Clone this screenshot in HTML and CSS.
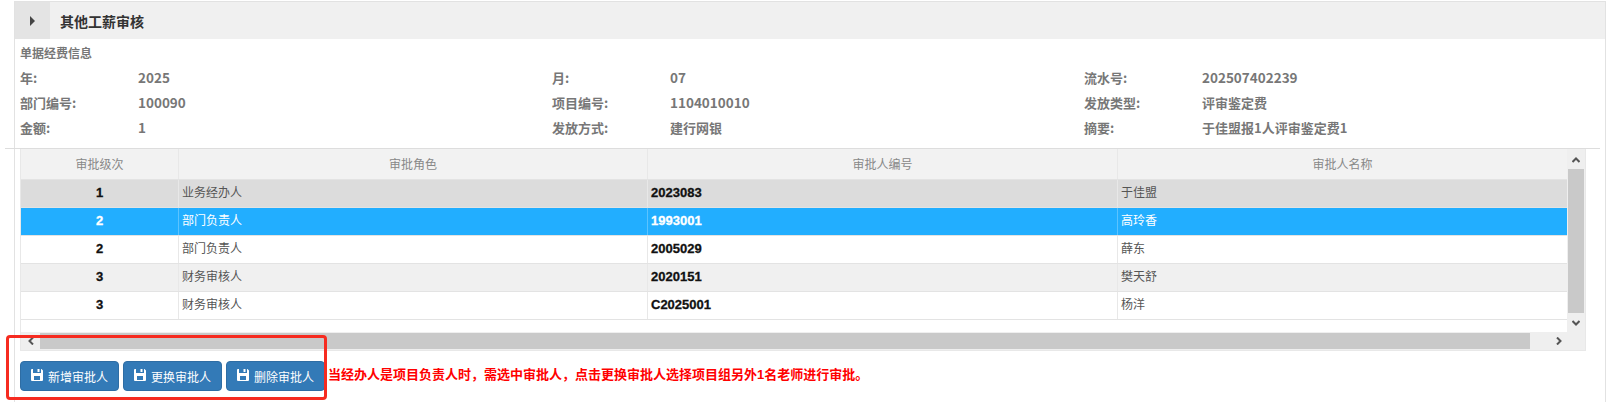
FILE: index.html
```html
<!DOCTYPE html>
<html lang="zh-CN">
<head>
    <meta charset="UTF-8">
    <title>其他工薪审核</title>
    <link rel="stylesheet" href="styles.css">
</head>
<body>
    <div class="panel">
        <div class="panel-head">
            <div class="toggle"><span class="arrow"></span></div>
            <div class="panel-title">其他工薪审核</div>
        </div>
        <div class="info">
            <div class="info-title">单据经费信息</div>
            <div class="info-grid">
                <div class="info-row">
                    <div class="info-col"><span class="info-label">年:</span><span class="num">2025</span></div>
                    <div class="info-col"><span class="info-label">月:</span><span class="num">07</span></div>
                    <div class="info-col"><span class="info-label">流水号:</span><span class="num">202507402239</span></div>
                </div>
                <div class="info-row">
                    <div class="info-col"><span class="info-label">部门编号:</span><span class="num">100090</span></div>
                    <div class="info-col"><span class="info-label">项目编号:</span><span class="num">1104010010</span></div>
                    <div class="info-col"><span class="info-label">发放类型:</span><span>评审鉴定费</span></div>
                </div>
                <div class="info-row">
                    <div class="info-col"><span class="info-label">金额:</span><span class="num">1</span></div>
                    <div class="info-col"><span class="info-label">发放方式:</span><span>建行网银</span></div>
                    <div class="info-col"><span class="info-label">摘要:</span><span>于佳盟报1人评审鉴定费1</span></div>
                </div>
            </div>
        </div>
        <div class="divider"></div>
        <div class="grid-wrap">
            <div class="grid-main">
                <div class="grid-body">
                    <div class="grid-row grid-head">
                        <div class="c1">审批级次</div><div class="c2">审批角色</div><div class="c3">审批人编号</div><div class="c4">审批人名称</div>
                    </div>
                    <div class="grid-row row-gray">
                        <div class="c1">1</div><div class="c2">业务经办人</div><div class="c3">2023083</div><div class="c4">于佳盟</div>
                    </div>
                    <div class="grid-row row-on">
                        <div class="c1">2</div><div class="c2">部门负责人</div><div class="c3">1993001</div><div class="c4">高玲香</div>
                    </div>
                    <div class="grid-row">
                        <div class="c1">2</div><div class="c2">部门负责人</div><div class="c3">2005029</div><div class="c4">薛东</div>
                    </div>
                    <div class="grid-row row-alt">
                        <div class="c1">3</div><div class="c2">财务审核人</div><div class="c3">2020151</div><div class="c4">樊天舒</div>
                    </div>
                    <div class="grid-row">
                        <div class="c1">3</div><div class="c2">财务审核人</div><div class="c3">C2025001</div><div class="c4">杨洋</div>
                    </div>
                </div>
                <div class="vbar">
                    <svg class="chev chev-up" viewBox="0 0 8 6"><path d="M0.5 5 L4 1.5 L7.5 5" fill="none" stroke="#555" stroke-width="2"/></svg>
                    <div class="vthumb"></div>
                    <svg class="chev chev-down" viewBox="0 0 8 6"><path d="M0.5 1 L4 4.500 L7.5 1" fill="none" stroke="#555" stroke-width="2"/></svg>
                </div>
            </div>
            <div class="hbar">
                <svg class="chev-side chev-left" viewBox="0 0 6 8"><path d="M5 0.5 L1.5 4 L5 7.5" fill="none" stroke="#555" stroke-width="2"/></svg>
                <div class="hthumb"></div>
                <svg class="chev-side chev-right" viewBox="0 0 6 8"><path d="M1 0.5 L4.500 4 L1 7.5" fill="none" stroke="#555" stroke-width="2"/></svg>
            </div>
        </div>
        <div class="actions">
            <button class="btn"><svg class="save" viewBox="0 0 12 12"><path fill-rule="evenodd" d="M0 1 a1 1 0 0 1 1-1 h1 v4 h8 v-4 h.5 L12 1.500 V11 a1 1 0 0 1-1 1 H1 a1 1 0 0 1-1-1 Z M3 7 v4 h6 V7 Z M6.500 0 h2 v3 h-2 Z" fill="#fff"/></svg>新增审批人</button>
            <button class="btn"><svg class="save" viewBox="0 0 12 12"><path fill-rule="evenodd" d="M0 1 a1 1 0 0 1 1-1 h1 v4 h8 v-4 h.5 L12 1.500 V11 a1 1 0 0 1-1 1 H1 a1 1 0 0 1-1-1 Z M3 7 v4 h6 V7 Z M6.500 0 h2 v3 h-2 Z" fill="#fff"/></svg>更换审批人</button>
            <button class="btn"><svg class="save" viewBox="0 0 12 12"><path fill-rule="evenodd" d="M0 1 a1 1 0 0 1 1-1 h1 v4 h8 v-4 h.5 L12 1.500 V11 a1 1 0 0 1-1 1 H1 a1 1 0 0 1-1-1 Z M3 7 v4 h6 V7 Z M6.500 0 h2 v3 h-2 Z" fill="#fff"/></svg>删除审批人</button>
            <span class="notice">当经办人是项目负责人时，需选中审批人，点击更换审批人选择项目组另外1名老师进行审批。</span>
        </div>
        <div class="mark"></div>
    </div>
</body>
</html>
```

FILE: styles.css
```css
* {
    box-sizing: border-box;
}
body {
    margin: 0;
    background-color: #fff;
    font-family: "Liberation Sans", "Noto Sans CJK SC", sans-serif;
    font-size: 12px;
    color: #333;
    overflow: hidden;
}
.panel {
    position: relative;
    margin: 1px 0 0 14px;
    width: 1592px;
    height: 401px;
    border-left: 1px solid #e2e2e2;
    border-right: 1px solid #e2e2e2;
    border-top: 1px solid #e2e2e2;
}
.panel-head {
    display: flex;
    align-items: center;
    height: 37px;
    background-color: #f0f0f0;
}
.toggle {
    display: flex;
    align-items: center;
    justify-content: center;
    width: 35px;
    height: 37px;
    background-color: #e4e4e4;
}
.arrow {
    border-left: 5px solid #444;
    border-top: 5px solid transparent;
    border-bottom: 5px solid transparent;
}
.panel-title {
    margin-left: 10px;
    font-size: 14px;
    font-weight: bold;
    color: #333;
}
.info {
    padding: 6px 0 0 5px;
    height: 109px;
    font-family: "Noto Sans CJK SC", sans-serif;
    font-weight: bold;
    color: #777;
}
.info-title {
    height: 16px;
    line-height: 16px;
    font-size: 12px;
}
.info-grid {
    margin-top: 4px;
}
.info-row {
    display: flex;
    height: 25px;
    line-height: 25px;
    font-size: 13px;
}
.info-col {
    display: flex;
    flex: none;
    width: 532px;
}
.info-label {
    width: 118px;
}
.num {
    font-size: 13.500px;
}
.divider {
    margin-left: -10px;
    margin-right: 5px;
    border-top: 1px solid #ddd;
    height: 1px;
}
.grid-wrap {
    margin-left: 5px;
    width: 1566px;
    border: 1px solid #e8e8e8;
    border-top: none;
}
.grid-main {
    display: flex;
}
.grid-body {
    flex: 1;
    height: 183px;
}
.grid-row {
    display: flex;
    height: 28px;
    line-height: 27px;
    font-size: 12px;
    color: #555;
    border-bottom: 1px solid #e3e3e3;
}
.grid-row > div {
    padding-left: 3px;
    border-right: 1px solid #e8e8e8;
}
.grid-row > .c1 {
    width: 158px;
    padding-left: 0;
    text-align: center;
    font-weight: bold;
    color: #111;
    font-size: 13px;
    line-height: 25px;
    -webkit-text-stroke: 0.3px;
}
.c2 {
    width: 469px;
}
.grid-row > .c3 {
    width: 470px;
    font-weight: bold;
    color: #111;
    font-size: 13px;
    line-height: 25px;
    -webkit-text-stroke: 0.3px;
}
.c4 {
    flex: 1;
}
.grid-row > .c4 {
    border-right: none;
}
.grid-head {
    height: 31px;
    background-color: #f2f2f2;
}
.grid-head > div,
.grid-row.grid-head > .c1,
.grid-row.grid-head > .c3 {
    padding-left: 0;
    text-align: center;
    font-weight: normal;
    font-size: 12px;
    line-height: 32px;
    color: #888;
    -webkit-text-stroke: 0;
}
.row-gray {
    background-color: #dcdcdc;
}
.row-alt {
    background-color: #f0f0f0;
}
.row-on {
    background-color: #22aeff;
}
.row-on > div,
.grid-row.row-on > .c1,
.grid-row.row-on > .c3 {
    color: #fff;
    border-right-color: #5cc3ff;
}
.vbar {
    display: flex;
    flex-direction: column;
    align-items: center;
    width: 18px;
    background-color: #efefef;
}
.vthumb {
    flex: 1;
    width: 16px;
    background-color: #c9c9c9;
}
.chev {
    width: 8px;
    height: 6px;
}
.chev-up {
    margin: 8px 0 6px;
}
.chev-down {
    margin: 7px 0 6px;
}
.hbar {
    display: flex;
    align-items: center;
    height: 18px;
    background-color: #efefef;
}
.hthumb {
    flex: 1;
    height: 16px;
    background-color: #c9c9c9;
}
.chev-side {
    width: 6px;
    height: 8px;
}
.chev-left {
    margin: 0 6px 0 7px;
}
.chev-right {
    margin: 0 23px 0 26px;
}
.actions {
    display: flex;
    align-items: center;
    margin: 10px 0 0 5px;
    height: 30px;
    gap: 4px;
}
.btn {
    display: flex;
    align-items: center;
    justify-content: center;
    gap: 5px;
    width: 99px;
    height: 30px;
    padding: 0;
    border: 1px solid #2e6da4;
    border-radius: 4px;
    background-color: #337ab7;
    color: #fff;
    font-family: inherit;
    font-size: 12px;
}
.save {
    width: 12px;
    height: 12px;
    margin-top: -2px;
}
.notice {
    margin: 0 0 5px -1px;
    color: #f00;
    font-size: 13px;
    font-weight: bold;
}
.mark {
    position: absolute;
    left: -9px;
    top: 333px;
    width: 321px;
    height: 65px;
    border: 3px solid #f62b20;
    border-radius: 4px;
}
```
